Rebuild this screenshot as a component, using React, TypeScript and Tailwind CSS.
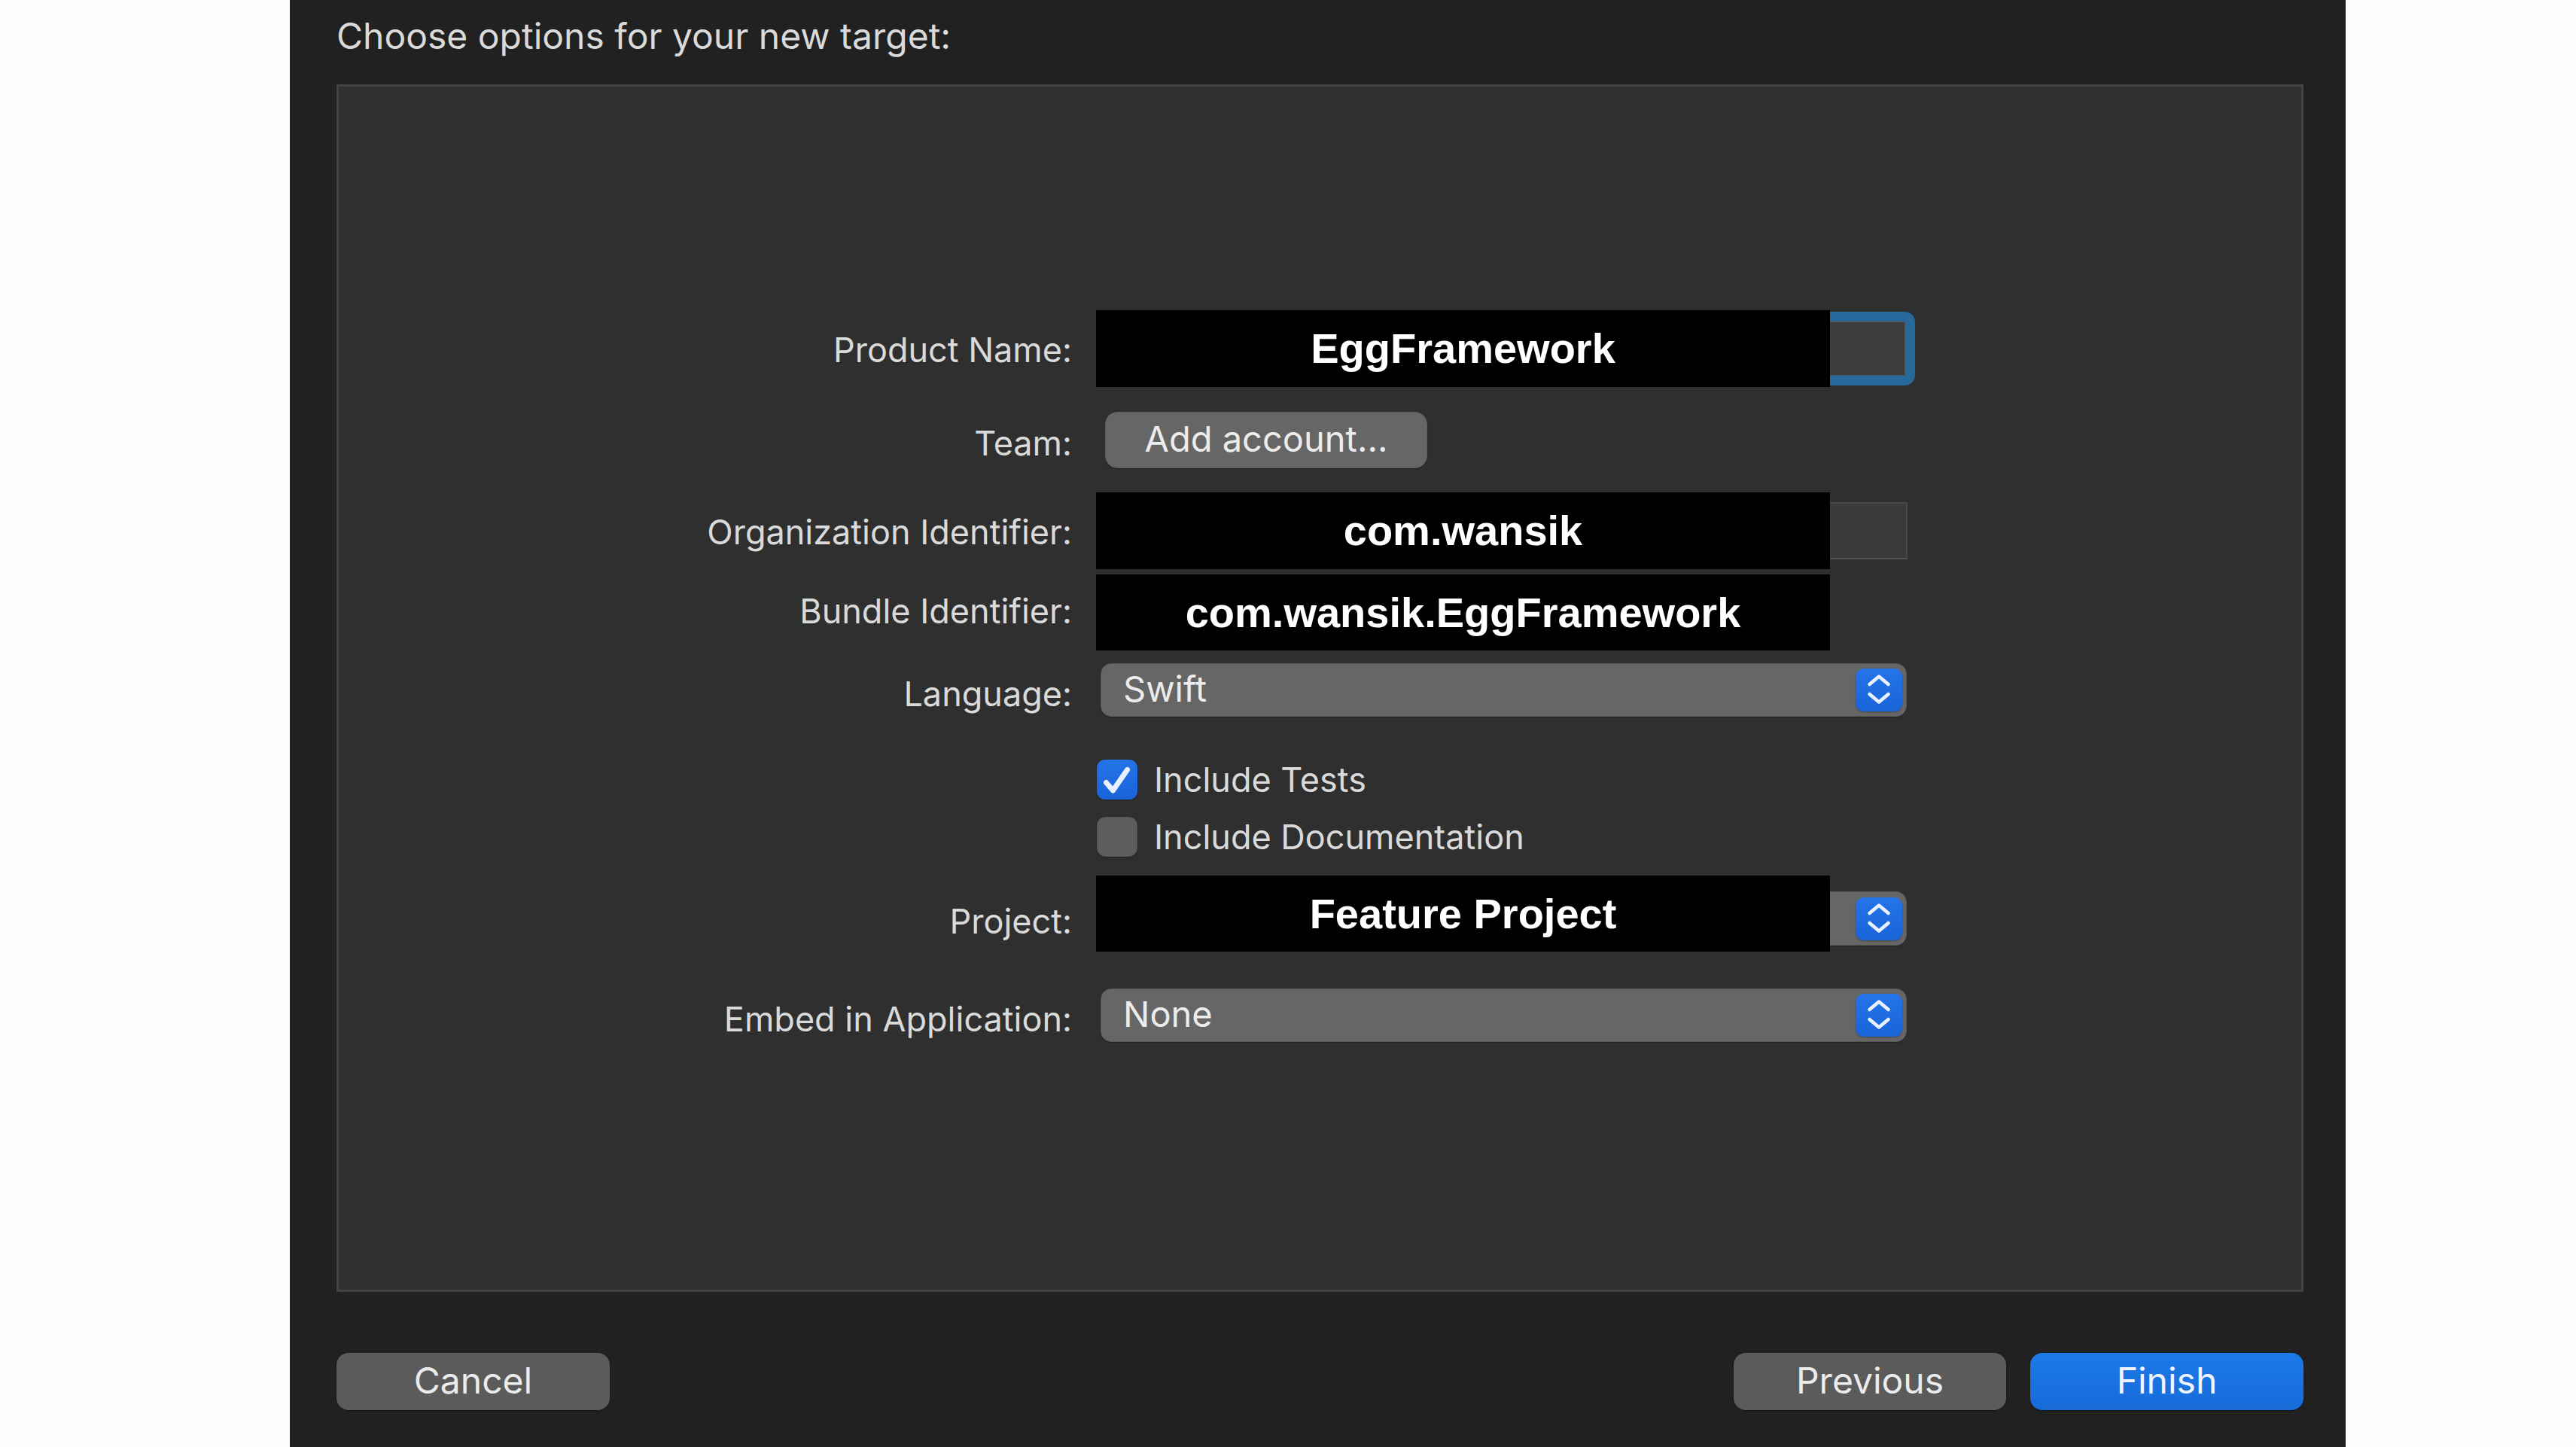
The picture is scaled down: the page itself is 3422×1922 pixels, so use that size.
import React from "react";

function Stepper() {
  return (
    <div className="flex h-[57px] w-[62px] items-center justify-center rounded-[11px] bg-gradient-to-b from-[#2474ea] to-[#1a63d8] shadow-[0_1px_2px_rgba(0,0,0,0.35)]">
      <svg width="62" height="57" viewBox="0 0 62 57" fill="none">
        <path d="M18.5 21 L31 10.5 L43.5 21" stroke="#e9f0ff" strokeWidth="4.5" strokeLinecap="round" strokeLinejoin="round" />
        <path d="M18.5 34 L31 44.5 L43.5 34" stroke="#e9f0ff" strokeWidth="4.5" strokeLinecap="round" strokeLinejoin="round" />
      </svg>
    </div>
  );
}

function Label({ children, pt = "pt-[6px]" }: { children: React.ReactNode; pt?: string }) {
  return (
    <div className={`w-[974px] shrink-0 text-right text-[45px] leading-[56px] text-[#dadada] ${pt}`}>
      {children}
    </div>
  );
}

function Redacted({ children }: { children: React.ReactNode }) {
  return (
    <div className="absolute left-0 top-0 flex h-full w-[975px] items-center justify-center bg-black font-['Liberation_Sans',Arial,sans-serif] text-[56px] font-bold leading-none text-white">
      {children}
    </div>
  );
}

function Popup({ text, className = "" }: { text: string; className?: string }) {
  return (
    <div className={`flex h-[71px] w-[1071px] items-center justify-between rounded-[14px] border border-[#575757] bg-[#666666] pl-[29px] pr-[5px] shadow-[0_1px_1px_rgba(0,0,0,0.3)] ${className}`}>
      <span className="pb-[4px] text-[47px] leading-[56px] text-[#ececec]">{text}</span>
      <Stepper />
    </div>
  );
}

function Checkbox({ checked }: { checked: boolean }) {
  if (checked) {
    return (
      <div className="flex h-[53px] w-[54px] shrink-0 items-center justify-center rounded-[11px] bg-gradient-to-b from-[#2474ea] to-[#1a63d8] shadow-[0_1px_2px_rgba(0,0,0,0.35)]">
        <svg width="54" height="53" viewBox="0 0 54 53" fill="none">
          <path d="M12.5 30.5 L21.5 41 L40.5 13.5" stroke="#e9f0ff" strokeWidth="7" strokeLinecap="round" strokeLinejoin="round" />
        </svg>
      </div>
    );
  }
  return (
    <div className="h-[53px] w-[54px] shrink-0 rounded-[11px] border border-[#555555] bg-[#5d5d5d] shadow-[0_1px_2px_rgba(0,0,0,0.35)]" />
  );
}

export default function App() {
  return (
    <div className="flex h-[1922px] w-[3422px] bg-[#fefefe] font-['Inter',sans-serif]">
      <div className="ml-[385px] flex h-full w-[2731px] flex-col bg-[#212121] pl-[62px] pr-[56px]">
        <div className="h-[112px] pt-[18px] text-[48px] leading-[60px] text-[#dadada]">
          Choose options for your new target:
        </div>

        <div className="flex h-[1604px] flex-col border-[3px] border-[#434343] bg-[#2f2f2f] pt-[297px]">
          {/* Product Name */}
          <div className="flex h-[102px] items-center">
            <Label pt="pt-[4px]">Product Name:</Label>
            <div className="relative ml-[32px] flex h-[102px] w-[1088px] items-center">
              <div className="h-[98px] w-[1088px] rounded-[14px] border-[13px] border-[#28699b] bg-[#3c3c3c] shadow-[inset_0_0_0_1px_#555]" />
              <Redacted>EggFramework</Redacted>
            </div>
          </div>

          {/* Team */}
          <div className="mt-[33px] flex h-[75px] items-center">
            <Label pt="pt-[8px]">Team:</Label>
            <div className="ml-[44px] flex h-[75px] w-[428px] items-center justify-center rounded-[16px] border border-[#5c5c5c] bg-[#666666] shadow-[0_1px_1px_rgba(0,0,0,0.3)]">
              <span className="pb-[4px] text-[47px] leading-[56px] text-[#ececec]">Add account...</span>
            </div>
          </div>

          {/* Organization Identifier */}
          <div className="mt-[32px] flex h-[102px] items-center">
            <Label pt="pt-[4px]">Organization Identifier:</Label>
            <div className="relative ml-[32px] flex h-[102px] w-[1078px] items-center">
              <div className="h-[76px] w-[1078px] border-2 border-[#484848] border-b-[#525252] bg-[#3b3b3b]" />
              <Redacted>com.wansik</Redacted>
            </div>
          </div>

          {/* Bundle Identifier */}
          <div className="mt-[7px] flex h-[101px] items-center">
            <Label pt="pt-0 pb-[4px]">Bundle Identifier:</Label>
            <div className="relative ml-[32px] flex h-[101px] w-[1078px] items-center">
              <Redacted>com.wansik.EggFramework</Redacted>
            </div>
          </div>

          {/* Language */}
          <div className="mt-[17px] flex h-[71px] items-center">
            <Label pt="pt-[10px]">Language:</Label>
            <div className="ml-[38px]">
              <Popup text="Swift" />
            </div>
          </div>

          {/* Include Tests */}
          <div className="mt-[57px] flex h-[53px] items-center">
            <div className="w-[974px] shrink-0" />
            <div className="ml-[33px] flex items-center">
              <Checkbox checked />
              <span className="ml-[22px] text-[45px] leading-[56px] text-[#dadada]">Include Tests</span>
            </div>
          </div>

          {/* Include Documentation */}
          <div className="mt-[23px] flex h-[53px] items-center">
            <div className="w-[974px] shrink-0" />
            <div className="ml-[33px] flex items-center">
              <Checkbox checked={false} />
              <span className="ml-[22px] text-[45px] leading-[56px] text-[#dadada]">Include Documentation</span>
            </div>
          </div>

          {/* Project */}
          <div className="mt-[25px] flex h-[101px] items-center">
            <Label pt="pt-[20px]">Project:</Label>
            <div className="relative ml-[32px] flex h-[101px] w-[1077px] items-start">
              <div className="ml-[6px] mt-[21px]">
                <Popup text="" className="h-[72px]" />
              </div>
              <Redacted>Feature Project</Redacted>
            </div>
          </div>

          {/* Embed in Application */}
          <div className="mt-[49px] flex h-[71px] items-center">
            <Label pt="pt-[10px]">Embed in Application:</Label>
            <div className="ml-[38px]">
              <Popup text="None" />
            </div>
          </div>
        </div>

        <div className="mt-[81px] flex h-[76px] items-center">
          <div className="flex h-[76px] w-[363px] items-center justify-center rounded-[16px] bg-[#5b5b5b] shadow-[0_1px_2px_rgba(0,0,0,0.4)]">
            <span className="pb-[2px] text-[48px] leading-[56px] text-[#ebebeb]">Cancel</span>
          </div>
          <div className="flex-1" />
          <div className="flex h-[76px] w-[362px] items-center justify-center rounded-[16px] bg-[#5b5b5b] shadow-[0_1px_2px_rgba(0,0,0,0.4)]">
            <span className="pb-[2px] text-[48px] leading-[56px] text-[#ebebeb]">Previous</span>
          </div>
          <div className="ml-[32px] flex h-[76px] w-[363px] items-center justify-center rounded-[16px] bg-gradient-to-b from-[#1c7ae8] to-[#176bd9] shadow-[0_1px_2px_rgba(0,0,0,0.4)]">
            <span className="pb-[2px] text-[48px] leading-[56px] text-[#eef3fd]">Finish</span>
          </div>
        </div>
      </div>
    </div>
  );
}
